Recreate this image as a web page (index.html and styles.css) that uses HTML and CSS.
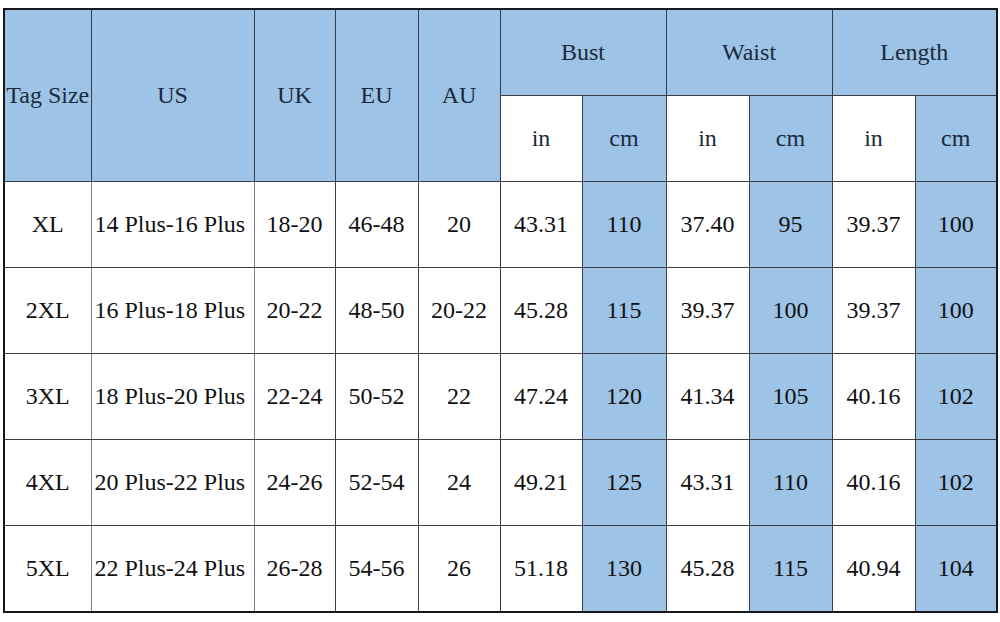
FILE: index.html
```html
<!DOCTYPE html>
<html>
<head>
<meta charset="utf-8">
<link rel="stylesheet" href="styles.css">
</head>
<body>
<table class="size-table">
  <colgroup>
    <col class="c-tag"><col class="c-us"><col class="c-uk"><col class="c-eu"><col class="c-au">
    <col class="c-bi"><col class="c-bc"><col class="c-m"><col class="c-m"><col class="c-m"><col class="c-last">
  </colgroup>
  <thead>
    <tr class="head-top">
      <th rowspan="2" class="blue tag">Tag Size</th>
      <th rowspan="2" class="blue">US</th>
      <th rowspan="2" class="blue">UK</th>
      <th rowspan="2" class="blue">EU</th>
      <th rowspan="2" class="blue">AU</th>
      <th colspan="2" class="blue">Bust</th>
      <th colspan="2" class="blue">Waist</th>
      <th colspan="2" class="blue">Length</th>
    </tr>
    <tr class="head-sub">
      <th>in</th><th class="blue">cm</th>
      <th>in</th><th class="blue">cm</th>
      <th>in</th><th class="blue">cm</th>
    </tr>
  </thead>
  <tbody>
    <tr><td>XL</td><td class="us">14 Plus-16 Plus</td><td>18-20</td><td>46-48</td><td>20</td><td>43.31</td><td class="blue">110</td><td>37.40</td><td class="blue">95</td><td>39.37</td><td class="blue">100</td></tr>
    <tr><td>2XL</td><td class="us">16 Plus-18 Plus</td><td>20-22</td><td>48-50</td><td>20-22</td><td>45.28</td><td class="blue">115</td><td>39.37</td><td class="blue">100</td><td>39.37</td><td class="blue">100</td></tr>
    <tr><td>3XL</td><td class="us">18 Plus-20 Plus</td><td>22-24</td><td>50-52</td><td>22</td><td>47.24</td><td class="blue">120</td><td>41.34</td><td class="blue">105</td><td>40.16</td><td class="blue">102</td></tr>
    <tr><td>4XL</td><td class="us">20 Plus-22 Plus</td><td>24-26</td><td>52-54</td><td>24</td><td>49.21</td><td class="blue">125</td><td>43.31</td><td class="blue">110</td><td>40.16</td><td class="blue">102</td></tr>
    <tr><td>5XL</td><td class="us">22 Plus-24 Plus</td><td>26-28</td><td>54-56</td><td>26</td><td>51.18</td><td class="blue">130</td><td>45.28</td><td class="blue">115</td><td>40.94</td><td class="blue">104</td></tr>
  </tbody>
</table>
</body>
</html>
```

FILE: styles.css
```css
html, body {
  margin: 0;
  padding: 0;
  background: #ffffff;
}

body {
  padding: 8px 0 0 3px;
  font-family: "Liberation Serif", "DejaVu Serif", serif;
}

.size-table {
  border-collapse: collapse;
  table-layout: fixed;
  width: 994px;
  border: 2px solid #15171c;
  font-family: "Liberation Serif", "DejaVu Serif", serif;
  font-size: 24px;
  color: #111111;
}

.c-tag { width: 87px; }
.c-us { width: 163px; }
.c-uk { width: 81px; }
.c-eu { width: 83px; }
.c-au { width: 82px; }
.c-bi { width: 82px; }
.c-bc { width: 84px; }
.c-m { width: 83px; }
.c-last { width: 82px; }

.size-table th,
.size-table td {
  border: 1px solid #3a3d45;
  padding: 0;
  text-align: center;
  vertical-align: middle;
  white-space: nowrap;
  font-weight: normal;
  font-family: "Liberation Serif", "DejaVu Serif", serif;
}

.size-table th {
  color: #1b2a3c;
}

.head-top th {
  height: 85px;
}

.head-sub th {
  height: 85px;
}

.size-table tbody td {
  height: 85px;
}

.size-table tbody td:first-child,
.size-table tbody td.us {
  border-right-color: #7d7f84;
}

.size-table tbody td.us {
  text-align: left;
  padding-left: 3px;
}

.tag {
  text-align: left;
  padding-left: 3px;
}

.blue {
  background: #9dc3e6;
}
```
